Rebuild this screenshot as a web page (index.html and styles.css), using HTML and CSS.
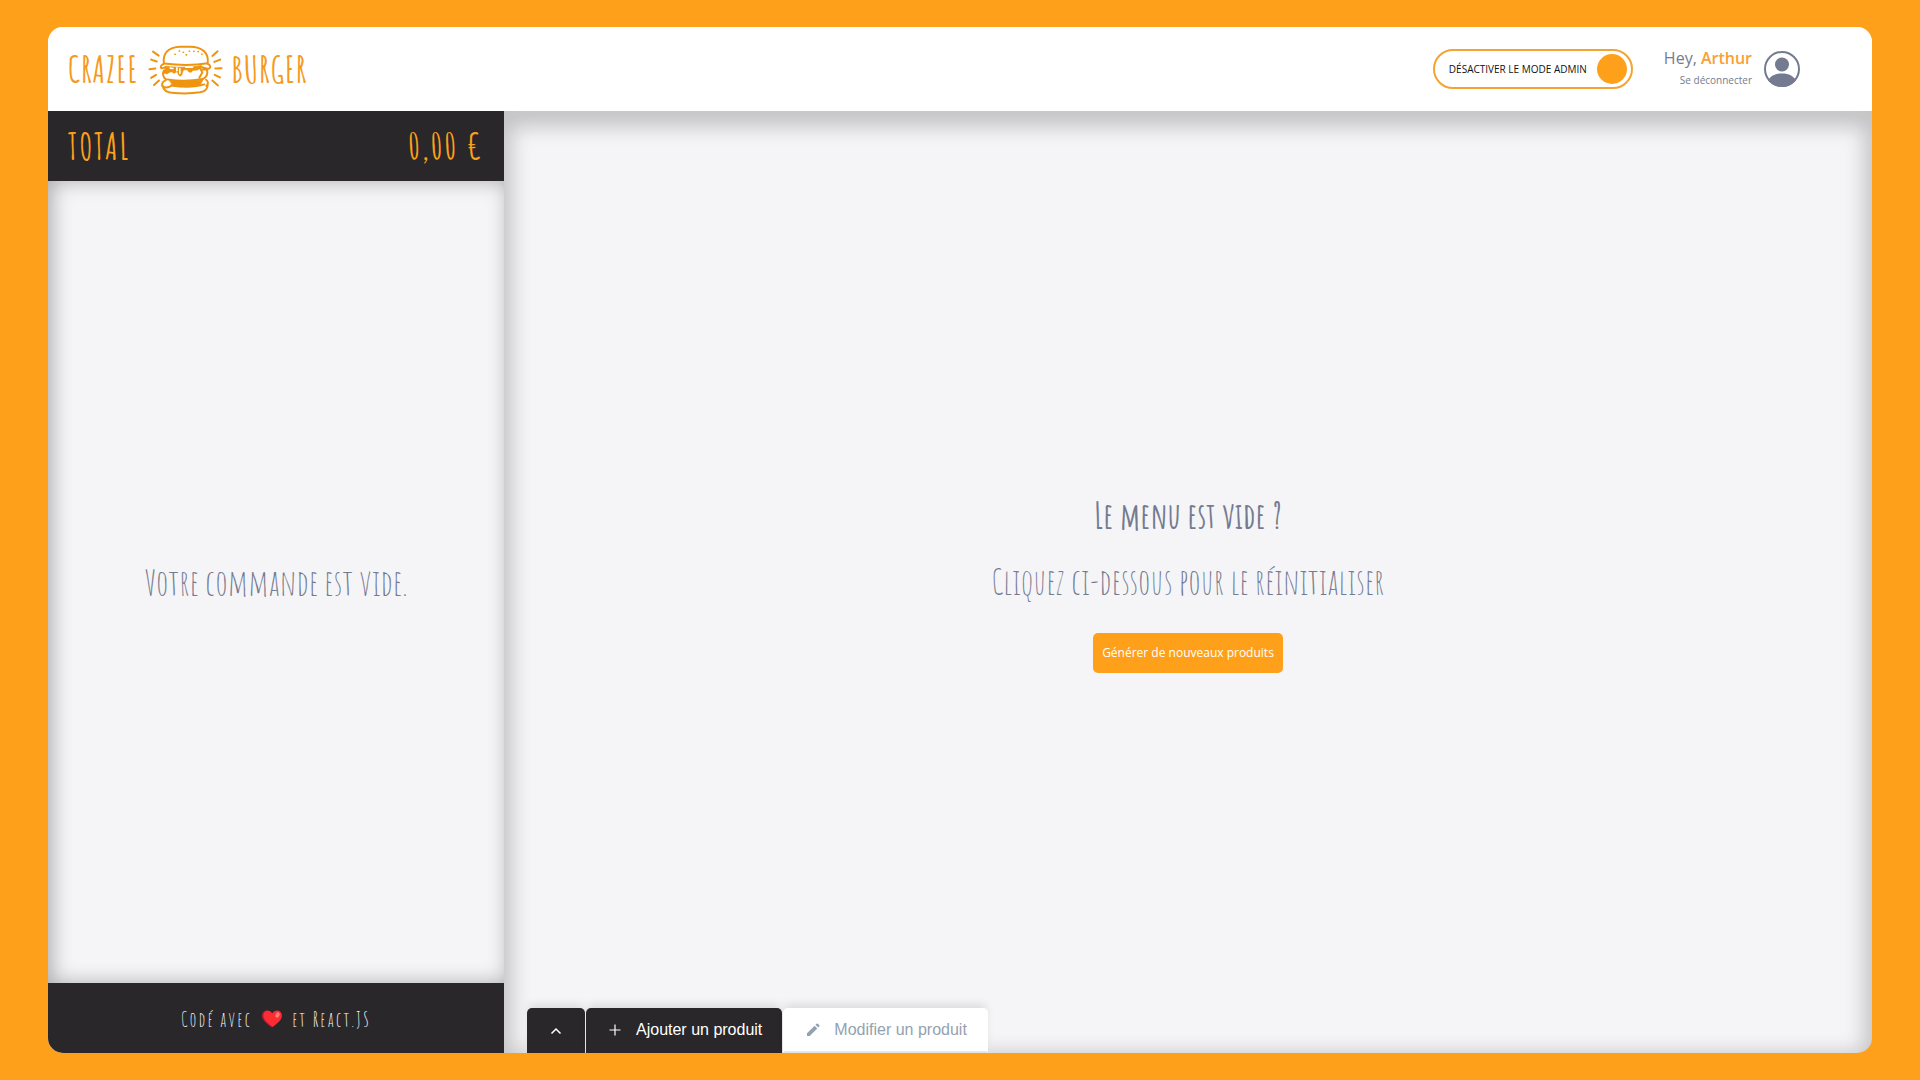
FILE: index.html
```html
<!DOCTYPE html>
<html lang="fr">
<head>
<meta charset="utf-8">
<meta name="viewport" content="width=device-width, initial-scale=1">
<title>Crazee Burger</title>
<link rel="stylesheet" href="styles.css">
</head>
<body>
<div class="app">
  <header class="navbar">
    <a class="logo" href="#">
      <span class="logo-left">CRAZEE</span>
      <svg class="logo-burger" viewBox="25 20 226 154" fill="none" stroke="currentColor" stroke-width="6" stroke-linecap="round" stroke-linejoin="round" aria-hidden="true">
        <path d="M40 43l17 12M34 67l17 6M29 96l18-2M34 122l15-9M43 144l15-14M235 42l-16 14M243 67l-18 7M247 93l-19 1M242 121l-16-8M236 145l-17-15"/>
        <path d="M73 79C68 48 86 29 122 28h30c36 0 57 19 53 50-40 7-92 6-132 1z"/>
        <path d="M73 79c-8 4-12 10-8 14 6 1 10-2 14-4M204 79c9 4 12 11 5 15-8 2-16-2-24-5M73 101c-5 7-3 19 5 25 34 6 76 6 112 0 11-5 16-15 13-28M78 130c-12 4-13 14-8 19 8 4 20 2 26-4M200 128c8 5 7 13 1 19M70 147c0 14 13 20 34 21 29 2 57 1 78-2 17-3 24-10 23-25M94 145c28 4 72 6 101-3M181 91l8 15-9 15M190 97h15"/>
        <path fill="currentColor" stroke-width="2" d="M81 87c32 5 76 4 105-2l-6 10c-7 7-14 2-20 5-7 11-14 3-17-2l-10 0c-5 5-4 14-8 18-6 3-10-4-10-10-7-5-9 5-13 2-4-6-13-4-17 1-6 3-13-1-15-5z"/>
        <path fill="currentColor" stroke-width="2" d="M88 127c32 6 72 5 103 1l-8 15c-26 7-60 6-84 1z"/>
        <path stroke="#fff" stroke-width="5" d="M92 93l8 1M112 92v9M121 95v14M139 90h20"/>
        <path stroke-width="5" d="M106 51h1M119 41h1M131 45h1M140 53h1M149 42h1M163 42h1M176 43h1M187 51h1"/>
      </svg>
      <span class="logo-right">BURGER</span>
    </a>
    <div class="navbar-right">
      <label class="toggle">
        <span>DÉSACTIVER LE MODE ADMIN</span>
        <input type="checkbox" checked>
      </label>
      <div class="profile">
        <div class="profile-info">
          <p class="hello">Hey, <b>Arthur</b></p>
          <a class="logout" href="#">Se déconnecter</a>
        </div>
        <svg class="avatar" viewBox="0 0 36 36" aria-hidden="true">
          <defs><clipPath id="disc"><circle cx="18" cy="18" r="18"/></clipPath></defs>
          <circle cx="18" cy="18" r="17" fill="none" stroke="currentColor" stroke-width="2"/>
          <circle cx="18" cy="13.500" r="7" fill="currentColor"/>
          <path clip-path="url(#disc)" fill="currentColor" d="M3 31c3-6 8-8.500 15-8.500S30 25 33 31v6H3z"/>
        </svg>
      </div>
    </div>
  </header>

  <div class="page">
    <aside class="basket">
      <div class="total"><span>TOTAL</span><span class="amount">0,00 €</span></div>
      <div class="basket-body"><p class="message">Votre commande est vide.</p></div>
      <footer class="credits">
        <span>Codé avec</span>
        <svg class="heart" viewBox="0 0 20 18" role="img" aria-label="amour">
          <path fill="#b51b3c" d="M10 17.500C5 14 0 10.500 0 5.500 0 2.500 2.300.500 5 .500c2.200 0 4 1 5 3 1-2 2.800-3 5-3 2.700 0 5 2 5 5 0 5-5 8.500-10 12z"/>
          <path fill="#fb2d33" d="M10.500 16.800C6 13.500 1.500 10 1.500 5.500c0-2.800 2-4.700 4.300-4.700 2 0 3.500 1 4.400 3 1-2 2.600-3 4.700-3C17.600.800 19.700 2.700 19.700 5.500c0 4.500-4.700 8-9.200 11.300z"/>
          <ellipse cx="15.500" cy="5" rx="2" ry="2.700" fill="#ff7c70" transform="rotate(25 15.500 5)"/>
        </svg>
        <span>et React.JS</span>
      </footer>
    </aside>

    <main class="menu">
      <section class="empty-menu">
        <h1 class="message message-title">Le menu est vide ?</h1>
        <p class="message message-text">Cliquez ci-dessous pour le réinitialiser</p>
        <button class="generate" type="button">Générer de nouveaux produits</button>
      </section>
      <div class="tabs">
        <button class="tab tab-icon" type="button" aria-label="Ouvrir le panneau">
          <svg viewBox="0 0 16 16" fill="none" stroke="currentColor" stroke-width="1.500" aria-hidden="true"><path d="M3.500 10.500L8 6l4.500 4.500"/></svg>
        </button>
        <button class="tab" type="button">
          <svg viewBox="0 0 16 16" fill="none" stroke="currentColor" stroke-width="1.200" aria-hidden="true"><path d="M8 2.500v11M2.500 8h11"/></svg>
          <span>Ajouter un produit</span>
        </button>
        <button class="tab tab-light" type="button">
          <svg viewBox="0 0 16 16" fill="currentColor" aria-hidden="true"><path d="M2 14v-2.700L9.600 3.700l2.700 2.700L4.700 14zM10.500 2.800l1-1a1 1 0 0 1 1.400 0l1.300 1.300a1 1 0 0 1 0 1.400l-1 1z"/></svg>
          <span>Modifier un produit</span>
        </button>
      </div>
    </main>
  </div>
</div>
</body>
</html>
```
FILE: styles.css
```css
* { box-sizing: border-box; }

:root {
  --primary: #ffa01b;
  --dark: #292729;
  --grey: #747b91;
  --paper: #f5f5f7;
  --display: "Amatic SC", "Liberation Sans Narrow", sans-serif;
}

body {
  margin: 0;
  min-height: 100vh;
  display: flex;
  align-items: center;
  justify-content: center;
  background: var(--primary);
  font-family: "Open Sans", sans-serif;
  color: var(--grey);
}

p, h1 { margin: 0; }
a { color: inherit; text-decoration: none; }
button { font: inherit; border: 0; cursor: pointer; }

.app {
  width: 95%;
  min-height: 95vh;
  display: flex;
  flex-direction: column;
  border-radius: 15px;
  overflow: hidden;
  background: var(--paper);
}

/* Header */
.navbar {
  height: 84px;
  padding: 0 72px 0 20px;
  display: flex;
  align-items: center;
  justify-content: space-between;
  background: #fff;
}

.logo {
  display: flex;
  align-items: center;
  gap: 9px;
  font-family: var(--display);
  font-size: 36px;
  font-weight: bold;
  letter-spacing: 1px;
  color: #f59a20;
}

.logo-burger { width: 75px; height: 51px; color: #ee940f; }

.navbar-right { display: flex; align-items: center; gap: 31px; }

.toggle {
  width: 200px;
  height: 40px;
  padding: 0 4px 0 14px;
  display: flex;
  align-items: center;
  justify-content: space-between;
  border: 2px solid #f3a432;
  border-radius: 20px;
  font-size: 10px;
  color: #111;
  white-space: nowrap;
  cursor: pointer;
}

.toggle input {
  appearance: none;
  width: 30px;
  height: 30px;
  margin: 0;
  border-radius: 50%;
  background: var(--primary);
}

.profile { display: flex; align-items: center; gap: 12px; }
.profile-info { display: flex; flex-direction: column; align-items: flex-end; padding-bottom: 2px; }
.hello { font-size: 16px; line-height: 24px; }
.hello b { font-weight: 600; color: #f99f35; }
.logout { font-size: 10px; line-height: 20px; }
.avatar { width: 36px; height: 36px; }

/* Body */
.page {
  flex: 1;
  display: grid;
  grid-template-columns: 1fr 3fr;
}

.basket { display: flex; flex-direction: column; }

.total, .credits {
  height: 70px;
  display: flex;
  align-items: center;
  background: var(--dark);
  font-family: var(--display);
  letter-spacing: 2px;
}

.total {
  padding: 0 20px;
  justify-content: space-between;
  font-size: 36px;
  font-weight: bold;
  color: var(--primary);
}

.basket-body {
  flex: 1;
  display: grid;
  place-items: center;
  box-shadow: inset 4px 0 20px 0 rgba(0, 0, 0, 0.3);
}

.message {
  font-family: var(--display);
  font-size: 36px;
  line-height: 48px;
  text-align: center;
}

.credits {
  padding-top: 2px;
  justify-content: center;
  gap: 10px;
  font-size: 20px;
  color: #f5f5f7;
}

.heart { width: 20px; height: 18px; }

.menu {
  display: grid;
  box-shadow: inset 0 8px 20px 8px rgba(0, 0, 0, 0.2);
}

.empty-menu, .tabs { grid-area: 1 / 1; }

.empty-menu {
  display: flex;
  flex-direction: column;
  align-items: center;
  justify-content: center;
}

.message-title { margin-bottom: 18px; font-weight: bold; }
.message-text { margin-bottom: 28px; }

.generate {
  height: 40px;
  padding: 0 9px 2px;
  border-radius: 5px;
  background: var(--primary);
  font-size: 12px;
  font-weight: 500;
  color: #fff;
}

.tabs {
  align-self: end;
  justify-self: start;
  margin-left: 23px;
  display: flex;
  gap: 1px;
}

.tab {
  height: 45px;
  padding: 0 20px 2px 21px;
  display: flex;
  align-items: center;
  gap: 13px;
  border-radius: 5px 5px 0 0;
  background: var(--dark);
  box-shadow: 0 -6px 8px -2px rgba(0, 0, 0, 0.1);
  font-family: "Liberation Sans", Arial, sans-serif;
  font-size: 16px;
  color: #fff;
}

.tab svg { width: 16px; height: 16px; }
.tab-icon { padding: 0 21px; }

.tab-light {
  padding-bottom: 0;
  border: 1px solid #fff;
  border-bottom: 2px solid #e4e5e9;
  background: #fff;
  color: #93a2b1;
}
```
